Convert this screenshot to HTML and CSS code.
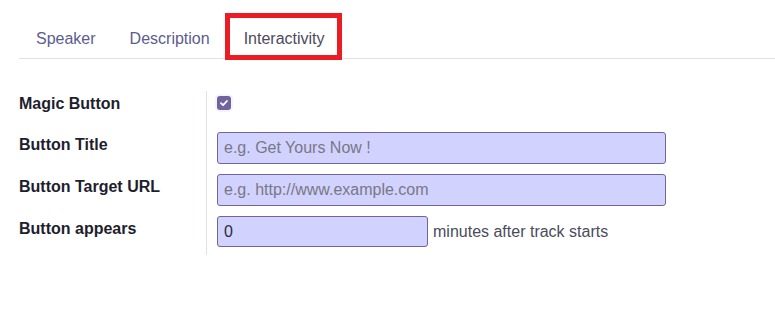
FILE: index.html
```html
<!DOCTYPE html>
<html>
<head>
  <link rel="stylesheet" href="styles.css">
</head>
<body>
  <!-- Tabs -->
  <div class="nav-tabs">
    <a class="nav-link">Speaker</a>
    <a class="nav-link">Description</a>
    <a class="nav-link active">Interactivity</a>
  </div>

  <!-- Interactivity form -->
  <div class="form-grid">
    <div class="form-label">Magic Button</div>
    <div class="form-field field-check">
      <span class="checkbox">
        <svg width="10" height="10" viewBox="0 0 10 10"><path d="M2 5.2 L4.1 7.2 L8 3" fill="none" stroke="#fff" stroke-width="1.8" stroke-linecap="round" stroke-linejoin="round"/></svg>
      </span>
    </div>

    <div class="form-label">Button Title</div>
    <div class="form-field">
      <input class="form-input" type="text" placeholder="e.g. Get Yours Now !">
    </div>

    <div class="form-label">Button Target URL</div>
    <div class="form-field">
      <input class="form-input" type="text" placeholder="e.g. http://www.example.com">
    </div>

    <div class="form-label">Button appears</div>
    <div class="form-field field-last">
      <input class="form-input input-short" type="text" value="0">
      <span class="field-suffix">minutes after track starts</span>
    </div>
  </div>
</body>
</html>
```

FILE: styles.css
```css
body {
  margin: 0;
  background: #fff;
  font-family: "Liberation Sans", Arial, sans-serif;
  font-size: 16px;
}

/* Tabs */
.nav-tabs {
  display: flex;
  margin-left: 19px;
  padding-top: 16px;
  border-bottom: 1px solid #dee2e6;
}

.nav-link {
  position: relative;
  padding: 11px 17px 7px;
  line-height: 24px;
  color: #5c5c90;
  cursor: pointer;
}

.nav-link.active {
  color: #4b4b5c;
}

/* annotation frame around the active tab */
.nav-link.active::after {
  content: "";
  position: absolute;
  left: -2px;
  right: 0;
  top: -3px;
  bottom: -2px;
  border: 5px solid #ec1c24;
}

/* Form */
.form-grid {
  display: grid;
  grid-template-columns: 187px 460px;
  margin: 32px 0 0 19px;
}

.form-label {
  padding-top: 1px;
  line-height: 24px;
  font-weight: bold;
  color: #1e1e2d;
}

.form-field {
  display: flex;
  align-items: center;
  padding: 0 0 10px 10px;
  border-left: 1px solid #dee2e6;
}

.field-check {
  height: 31px;
  align-items: flex-start;
}

.field-last {
  padding-bottom: 8px;
}

.checkbox {
  display: inline-flex;
  align-items: center;
  justify-content: center;
  width: 14px;
  height: 14px;
  margin-top: 5px;
  border-radius: 3px;
  background: #71639e;
  box-shadow: 0 0 0 2px #f4f4fa;
}

.form-input {
  box-sizing: border-box;
  flex: none;
  width: 449px;
  height: 32px;
  margin: 0;
  padding: 0 6px;
  border: 1px solid #71639e;
  border-radius: 3px;
  background: #d2d2ff;
  color: #2b2b3a;
  font-family: "Liberation Sans", Arial, sans-serif;
  font-size: 16px;
  outline: none;
}

.form-input::placeholder {
  color: #787884;
}

.input-short {
  width: 211px;
  height: 31px;
}

.field-suffix {
  margin-left: 5px;
  color: #4b4b5c;
  white-space: nowrap;
}
```
